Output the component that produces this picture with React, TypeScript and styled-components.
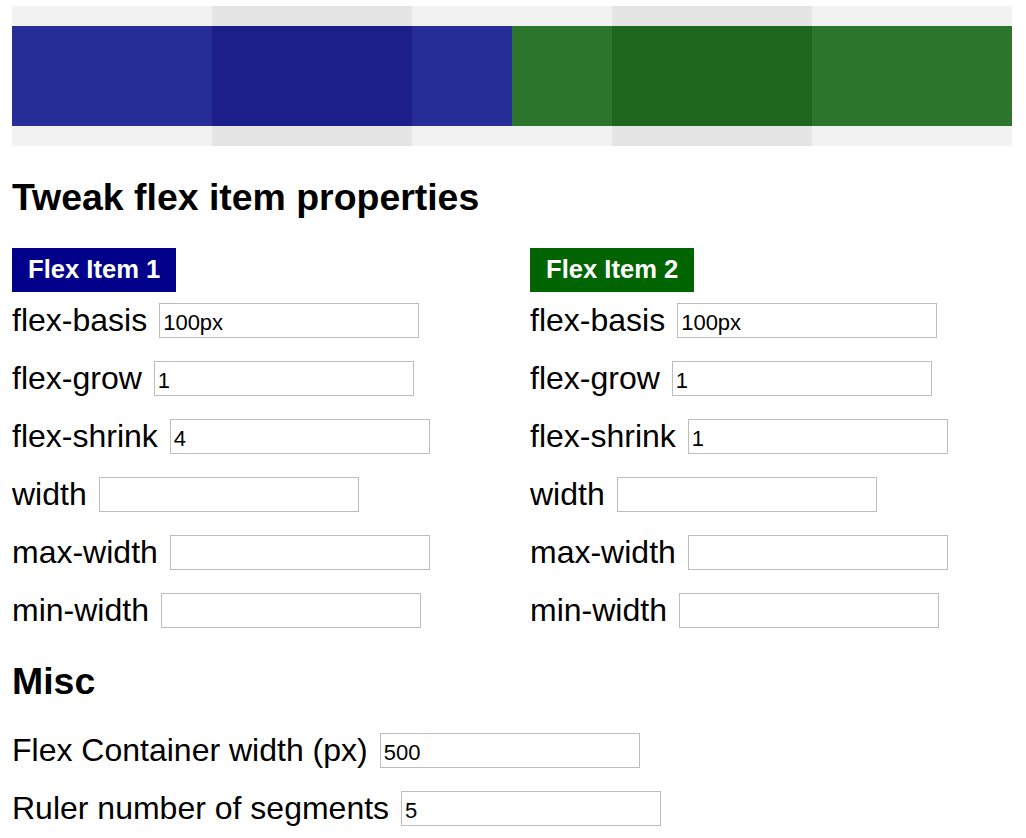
import React from "react";
import styled, { createGlobalStyle } from "styled-components";

const GlobalStyle = createGlobalStyle`
  html, body {
    margin: 0;
    padding: 0;
    background: #ffffff;
    font-family: "Liberation Sans", Arial, Helvetica, sans-serif;
    color: #000000;
  }
`;

const Page = styled.div`
  padding: 6px 0 0 12px;
`;

const Ruler = styled.div`
  display: grid;
  width: 1000px;
  height: 140px;
`;

const Segments = styled.div`
  grid-area: 1 / 1;
  display: flex;
`;

const Segment = styled.div<{ $dark: boolean }>`
  flex: 1 1 0;
  background: ${(p) => (p.$dark ? "#e5e5e5" : "#f2f2f2")};
`;

const ItemsBar = styled.div`
  grid-area: 1 / 1;
  align-self: center;
  display: flex;
  height: 100px;
`;

const Item = styled.div<{ $bg: string }>`
  flex: 0 0 500px;
  background: ${(p) => p.$bg};
`;

const Heading = styled.h3<{ $top: number }>`
  margin: ${(p) => p.$top}px 0 0 0;
  font-size: 37.44px;
  font-weight: bold;
  line-height: normal;
`;

const Columns = styled.div`
  display: grid;
  grid-template-columns: 518px 1fr;
  margin-top: 29px;
`;

const Column = styled.div`
  display: flex;
  flex-direction: column;
  align-items: flex-start;
`;

const Badge = styled.div<{ $bg: string }>`
  background: ${(p) => p.$bg};
  color: #ffffff;
  font-weight: bold;
  font-size: 25.6px;
  line-height: 30px;
  padding: 6px 16px 8px;
  margin-bottom: 10px;
`;

const Rows = styled.div<{ $top?: number }>`
  display: flex;
  flex-direction: column;
  gap: 21px;
  margin-top: ${(p) => p.$top ?? 0}px;
`;

const Row = styled.label`
  display: flex;
  align-items: center;
  gap: 12px;
  height: 37px;
  font-size: 32px;
  line-height: normal;
  white-space: nowrap;
`;

const Input = styled.input`
  box-sizing: border-box;
  width: 260px;
  height: 35px;
  margin: 0;
  padding: 4px 3px 0;
  border: 1px solid #bdbdbd;
  border-radius: 0;
  font-family: "Liberation Sans", Arial, Helvetica, sans-serif;
  font-size: 22px;
  color: #000000;
  background: #ffffff;
  outline: none;
`;

type Field = { label: string; value: string };

const item1: Field[] = [
  { label: "flex-basis", value: "100px" },
  { label: "flex-grow", value: "1" },
  { label: "flex-shrink", value: "4" },
  { label: "width", value: "" },
  { label: "max-width", value: "" },
  { label: "min-width", value: "" },
];

const item2: Field[] = [
  { label: "flex-basis", value: "100px" },
  { label: "flex-grow", value: "1" },
  { label: "flex-shrink", value: "1" },
  { label: "width", value: "" },
  { label: "max-width", value: "" },
  { label: "min-width", value: "" },
];

const misc: Field[] = [
  { label: "Flex Container width (px)", value: "500" },
  { label: "Ruler number of segments", value: "5" },
];

const FieldList = ({ fields, top }: { fields: Field[]; top?: number }) => (
  <Rows $top={top}>
    {fields.map((f) => (
      <Row key={f.label}>
        {f.label}
        <Input type="text" defaultValue={f.value} />
      </Row>
    ))}
  </Rows>
);

const blueBg =
  "linear-gradient(to right, #262d96 0 200px, #1c1f8a 200px 400px, #262d96 400px 500px)";
const greenBg =
  "linear-gradient(to right, #2c752c 0 100px, #1f671f 100px 300px, #2c752c 300px 500px)";

export default function App() {
  const segments = [0, 1, 2, 3, 4];
  return (
    <>
      <GlobalStyle />
      <Page>
        <Ruler>
          <Segments>
            {segments.map((i) => (
              <Segment key={i} $dark={i % 2 === 1} />
            ))}
          </Segments>
          <ItemsBar>
            <Item $bg={blueBg} />
            <Item $bg={greenBg} />
          </ItemsBar>
        </Ruler>

        <Heading $top={30}>Tweak flex item properties</Heading>

        <Columns>
          <Column>
            <Badge $bg="#00008b">Flex Item 1</Badge>
            <FieldList fields={item1} />
          </Column>
          <Column>
            <Badge $bg="#006400">Flex Item 2</Badge>
            <FieldList fields={item2} />
          </Column>
        </Columns>

        <Heading $top={31}>Misc</Heading>
        <FieldList fields={misc} top={29} />
      </Page>
    </>
  );
}
